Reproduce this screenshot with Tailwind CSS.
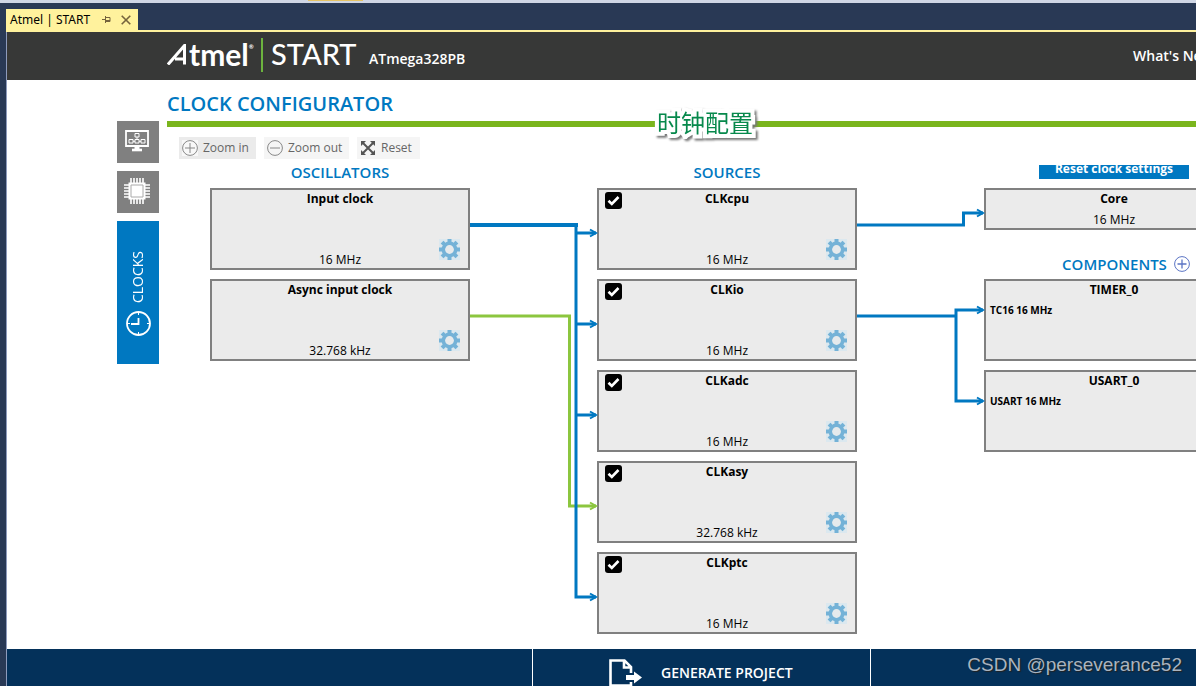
<!DOCTYPE html>
<html lang="en">
<head>
<meta charset="utf-8">
<title>Atmel | START</title>
<script src="https://cdn.jsdelivr.net/npm/@tailwindcss/browser@4"></script>
</head>
<body class="h-screen overflow-hidden bg-[#293955] font-['Open_Sans',sans-serif] text-black">
<svg class="hidden" aria-hidden="true">
  <symbol id="gear" viewBox="0 0 21 21">
    <rect width="21" height="21" fill="#dbe8ef"/>
    <g fill="#74b2d7">
      <rect x="8.500" y="0" width="4" height="21"/><rect x="0" y="8.500" width="21" height="4"/>
      <g transform="rotate(45 10.500 10.500)"><rect x="8.500" y="0" width="4" height="21"/><rect x="0" y="8.500" width="21" height="4"/></g>
      <circle cx="10.500" cy="10.500" r="7.900"/>
    </g>
    <circle cx="10.500" cy="10.500" r="4.400" fill="#e6eaec"/>
  </symbol>
  <symbol id="tick" viewBox="0 0 17 17">
    <path d="M3.500 8.800L6.800 12L13.500 5" fill="none" stroke="#fff" stroke-width="2.600"/>
  </symbol>
</svg>
<div class="flex h-full flex-col">
  <div class="h-[3px] shrink-0 bg-[#cfd6e5] pl-[308px]"><div class="h-px w-[55px] bg-[#e5c365]"></div></div>
  <div class="ml-[6px] flex shrink-0 border-b-2 border-[#fff29d] pt-[6px]">
    <div class="flex h-[21px] w-[132px] items-center bg-[#fff29d] pl-1 font-['Noto_Sans',sans-serif] text-xs">
      <span class="w-[92px] whitespace-nowrap">Atmel | START</span>
      <button class="w-[19px]" aria-label="Pin tab"><svg class="h-[9px] w-[9px]" viewBox="0 0 9 9" fill="none" stroke="#75633d"><path d="M0 4.500H3.500M3.500 1V8M3.500 2.500H8V6.500H3.500M3.500 5.500H8"/></svg></button>
      <button aria-label="Close tab"><svg class="h-[10px] w-[10px]" viewBox="0 0 10 10" fill="none" stroke="#75633d" stroke-width="1.600"><path d="M.7.7L9.300 9.300M9.300.7L.7 9.300"/></svg></button>
    </div>
  </div>
  <div class="ml-[6px] flex min-h-0 flex-1 flex-col border-l border-[#8e9bbc] bg-white">
    <header class="flex h-12 shrink-0 items-center bg-[#373837] pl-[160px] text-white">
      <a href="#" class="flex items-center pb-[2px] font-['Lato',sans-serif]" aria-label="Atmel START">
        <span class="flex h-[34px] w-[96px] items-center border-r-2 border-[#6cb33e] pb-[2px] text-[30px] font-bold"><svg class="h-[21px] w-[22px]" viewBox="0 0 22 21" fill="none" stroke="#fff" stroke-width="3"><path d="M1 20.500L17.500 1.500V20.500M8 15H17"/></svg>tmel<span class="self-start pt-1 text-[6px]">®</span></span>
        <span class="w-[106px] pb-[2px] pl-2 text-[29px] font-medium">START</span>
      </a>
      <span class="pt-[6px] text-sm font-semibold">ATmega328PB</span>
      <nav class="flex flex-1 justify-end overflow-hidden whitespace-nowrap text-sm font-semibold"><a href="#" class="w-[63px]">What's New</a></nav>
    </header>
    <div class="flex shrink-0 gap-2 pl-[110px]">
      <aside class="flex w-[42px] shrink-0 flex-col gap-2 pt-[41px]">
        <button class="grid h-[42px] place-items-center bg-[#808080] pr-[3px] pb-[2px]" aria-label="Dashboard">
          <svg class="h-[22px] w-6" viewBox="0 0 24 22" fill="none" stroke="#fff"><path d="M1 1H23V16H1Z" stroke-width="1.800"/><path d="M10 3.500H14V7H10ZM4 9.500H8V13H4ZM10 9.500H14V13H10ZM16 9.500H20V13H16ZM12 7V9.500M8 11.300H10M14 11.300H16"/><path d="M12 16V19" stroke-width="5"/><path d="M7 20H17" stroke-width="2.600"/></svg>
        </button>
        <button class="grid h-[42px] place-items-center bg-[#808080] pr-[3px] pb-[2px]" aria-label="Pinmux">
          <svg class="h-[26px] w-[26px]" viewBox="0 0 26 26" fill="#fff"><path d="M7 0V26M10 0V26M13 0V26M16 0V26M19 0V26M0 7H26M0 10H26M0 13H26M0 16H26M0 19H26" stroke="#fff" stroke-width="1.600"/><path d="M4.500 4.500H21.500V21.500H4.500Z"/><path d="M7 7H19V19H7Z" stroke="#aaa"/></svg>
        </button>
        <button class="flex h-[143px] flex-col items-center justify-end gap-2 bg-[#0078c1] pb-7 text-white">
          <span class="rotate-180 text-sm font-medium [writing-mode:vertical-rl]">CLOCKS</span>
          <svg class="h-[25px] w-[25px]" viewBox="0 0 25 25" fill="none" stroke="#fff"><circle cx="12.500" cy="12.500" r="11.500" stroke-width="1.800"/><path d="M12.500 7V13H5" stroke-width="1.800"/><path d="M12.500 1V4M12.500 21V24M1 12.500H4M21 12.500H24"/></svg>
        </button>
      </aside>
      <main class="min-w-0 flex-1 overflow-hidden pb-[15px]">
        <h1 class="h-[41px] pt-[10px] text-xl leading-7 font-semibold text-[#0078c1]">CLOCK CONFIGURATOR</h1>
        <div class="relative h-[6px] bg-[#7ab51d]">
          <span class="absolute -top-[15px] left-[490px] font-['Noto_Sans_CJK_SC',sans-serif] text-2xl text-[#07894c] drop-shadow-[2px_2px_1px_#777] [-webkit-text-stroke:8px_white] [paint-order:stroke_fill]">时钟配置</span>
        </div>
        <div class="flex h-[33px] gap-2 pt-[10px] pl-3 text-xs text-[#666]">
          <button class="flex h-[22px] w-[77px] items-center gap-[5px] whitespace-nowrap bg-[#ebebeb] pl-[3px]"><svg class="h-4 w-4 shrink-0 bg-[#f8f8f8]" viewBox="0 0 16 16" fill="none" stroke="#888"><circle cx="8" cy="8" r="7.400"/><path d="M3 8H13M8 3V13"/></svg>Zoom in</button>
          <button class="flex h-[22px] w-[85px] items-center gap-[5px] whitespace-nowrap bg-[#f5f5f5] pl-[3px]"><svg class="h-4 w-4 shrink-0" viewBox="0 0 16 16" fill="none" stroke="#888"><circle cx="8" cy="8" r="7.400"/><path d="M3 8H13"/></svg>Zoom out</button>
          <button class="flex h-[22px] w-[63px] items-center gap-[6px] bg-[#f5f5f5] pl-1"><svg class="h-[14px] w-[14px] shrink-0" viewBox="0 0 14 14" fill="#555"><path d="M2 2L12 12M12 2L2 12" stroke="#555" stroke-width="2"/><path d="M0 0H5L0 5ZM14 0V5L9 0ZM0 14V9L5 14ZM14 14H9L14 9Z"/></svg>Reset</button>
        </div>
        <section class="relative ml-[43px] flex w-max gap-[127px] text-xs">
          <div class="flex w-[260px] flex-col gap-[9px]">
            <h2 class="-mb-[9px] h-7 text-center text-[15px] leading-[25px] font-semibold text-[#0078c1]">OSCILLATORS</h2>
            <div class="grid h-[82px] grid-cols-[1fr_auto_1fr] grid-rows-[auto_1fr] border-2 border-[#808080] bg-[#ebebeb]">
              <b class="col-start-2 text-center leading-[18px]">Input clock</b><span class="col-start-2 self-end text-center leading-4">16 MHz</span>
              <button class="mr-2 mb-2 self-end justify-self-end" aria-label="Input clock settings"><svg class="h-[21px] w-[21px]"><use href="#gear"/></svg></button>
            </div>
            <div class="grid h-[82px] grid-cols-[1fr_auto_1fr] grid-rows-[auto_1fr] border-2 border-[#808080] bg-[#ebebeb]">
              <b class="col-start-2 text-center leading-[18px]">Async input clock</b><span class="col-start-2 self-end text-center leading-4">32.768 kHz</span>
              <button class="mr-2 mb-2 self-end justify-self-end" aria-label="Async input clock settings"><svg class="h-[21px] w-[21px]"><use href="#gear"/></svg></button>
            </div>
          </div>
          <div class="flex w-[260px] flex-col gap-[9px]" id="sources">
            <h2 class="-mb-[9px] h-7 text-center text-[15px] leading-[25px] font-semibold text-[#0078c1]">SOURCES</h2>
          </div>
          <div class="flex w-[260px] flex-col">
            <div class="flex h-7 justify-center pt-[5px]"><button class="flex h-[14px] w-[150px] items-end justify-center overflow-hidden bg-[#0078c1] pb-px text-xs leading-[18px] font-bold text-white">Reset clock settings</button></div>
            <div class="h-[42px] border-2 border-[#808080] bg-[#ebebeb] text-center leading-[18px]"><b class="block">Core</b><span class="block leading-6">16 MHz</span></div>
            <div class="flex h-[49px] items-center justify-center gap-[7px] pt-[22px] pb-1 pl-6 text-[#0078c1]"><h2 class="text-[15px] leading-5 font-semibold">COMPONENTS</h2><button aria-label="Add component"><svg class="h-4 w-4" viewBox="0 0 16 16" fill="none" stroke="#5b74c4"><circle cx="8" cy="8" r="7.400"/><path d="M3.500 8H12.500M8 3.500V12.500" stroke-width="1.300"/></svg></button></div>
            <div class="mb-[9px] h-[82px] border-2 border-[#808080] bg-[#ebebeb] leading-[18px]"><b class="block text-center">TIMER_0</b><b class="block pl-1 text-[10px] leading-[22px]">TC16 16 MHz</b></div>
            <div class="h-[82px] border-2 border-[#808080] bg-[#ebebeb] leading-[18px]"><b class="block text-center">USART_0</b><b class="block pl-1 text-[10px] leading-[22px]">USART 16 MHz</b></div>
          </div>
          <svg class="pointer-events-none absolute top-0 left-0 h-[480px] w-[986px]" viewBox="210 160 986 480" fill="none">
            <g stroke="#8cc63f" stroke-width="3"><path d="M470 316H569.500V506H596"/><path d="M590 502.500L596 506L590 509.500" stroke-width="2"/></g>
            <g stroke="#0078c1">
              <path d="M470 225H578" stroke-width="4"/><path d="M576 223V597H596M857 225H963.500V213H983M857 316H956M956 401V310H983M954.500 401H983" stroke-width="3"/>
              <path d="M576 233H596M576 324H596M576 415H596" stroke-width="3"/>
              <path d="M590 229.500L596 233L590 236.500M590 320.500L596 324L590 327.500M590 411.500L596 415L590 418.500M590 593.500L596 597L590 600.500M977 209.500L983 213L977 216.500M977 306.500L983 310L977 313.500M977 397.500L983 401L977 404.500" stroke-width="2"/>
            </g>
          </svg>
        </section>
      </main>
    </div>
    <footer class="relative grid min-h-12 flex-1 grid-cols-[525px_339px_1fr] bg-[#04315a] text-white">
      <button class="col-start-2 flex h-12 items-center gap-[19px] border-x border-white pl-[76px] text-sm font-semibold">
        <svg class="h-7 w-[33px]" viewBox="0 0 33 28" fill="none" stroke="#fff"><path d="M22 14V8L15.500 1.500H1.500V26.500H22V23M15 2V8.500H22" stroke-width="2.600"/><path d="M17 16H25V12.500L33 18.500L25 24.500V21H17Z" fill="#fff" stroke="none"/></svg>
        GENERATE PROJECT</button>
      <span class="absolute top-[2px] right-[14px] font-['Liberation_Sans',sans-serif] text-[19px] leading-7 text-[#a9b4c0] [text-shadow:1px_1px_1px_#222]">CSDN @perseverance52</span>
    </footer>
  </div>
</div>
<template id="source-node">
  <div class="grid h-[82px] grid-cols-[1fr_auto_1fr] grid-rows-[auto_1fr] border-2 border-[#808080] bg-[#ebebeb]">
    <label class="mt-[2px] -mb-1 ml-[6px] grid h-[17px] w-[17px]"><input type="checkbox" checked class="col-start-1 row-start-1 h-[17px] w-[17px] appearance-none rounded-[3px] bg-white checked:bg-black"><svg class="pointer-events-none col-start-1 row-start-1 h-[17px] w-[17px]"><use href="#tick"/></svg></label>
    <b class="col-start-2 text-center leading-[18px]"></b><span class="col-start-2 self-end text-center leading-4"></span>
    <button class="mr-2 mb-2 self-end justify-self-end"><svg class="h-[21px] w-[21px]"><use href="#gear"/></svg></button>
  </div>
</template>
<script>
  const sources = [['CLKcpu', '16 MHz'], ['CLKio', '16 MHz'], ['CLKadc', '16 MHz'], ['CLKasy', '32.768 kHz'], ['CLKptc', '16 MHz']];
  for (const [name, rate] of sources) {
    const node = document.getElementById('source-node').content.cloneNode(true);
    node.querySelector('b').textContent = name;
    node.querySelector('span').textContent = rate;
    node.querySelector('input').setAttribute('aria-label', name);
    node.querySelector('button').setAttribute('aria-label', name + ' settings');
    document.getElementById('sources').append(node);
  }
</script>
</body>
</html>
